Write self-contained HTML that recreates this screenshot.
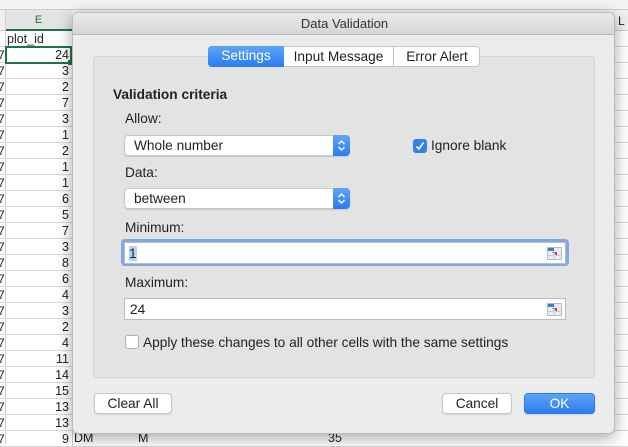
<!DOCTYPE html>
<html><head><style>
*{box-sizing:border-box;margin:0;padding:0}
body{width:628px;height:444px;overflow:hidden;background:#fff;font-family:"Liberation Sans",sans-serif;font-size:13.7px;color:#222;position:relative}
.a{position:absolute}
.row{position:absolute;left:0;width:628px;height:16px;border-bottom:1px solid #d8d8d8}
.num{position:absolute;right:559px;font-size:12.5px;top:1px}
.lbl{position:absolute;font-size:13.7px;color:#222}
.sel{position:absolute;background:#fff;border:1px solid #c8c8c8;border-radius:4px;height:21px;box-shadow:0 1px 1px rgba(0,0,0,.12)}
.sel span{position:absolute;left:9px;top:2px}
.sel i{position:absolute;right:-1px;top:-1px;width:17px;height:21px;background:linear-gradient(#5ea4f7,#2c7cf0);border-radius:0 4px 4px 0}
.sel i svg{position:absolute;left:4px;top:4px}
.inp{position:absolute;background:#fff;border:1px solid #bdbdbd;height:22px}
.ic{position:absolute;right:3px;top:4px;width:15px;height:13px}
.btn{position:absolute;background:#fff;border:1px solid #c6c6c6;border-radius:4px;height:21px;text-align:center;line-height:19px;font-size:13.7px;box-shadow:0 1px 1px rgba(0,0,0,.1)}
</style></head><body>
<div class="a" style="left:0;top:0;width:628px;height:10px;background:#f4f4f4;border-bottom:1px solid #ccc"></div>
<div class="a" style="left:0;top:10px;width:628px;height:21px;background:#f0f0f0;border-bottom:1px solid #ccc"></div>
<div class="a" style="left:5px;top:10px;width:67px;height:21px;background:#e4e4e4;border-bottom:2px solid #217346;color:#217346;text-align:center;font-size:11px;line-height:20px">E</div>
<div class="a" style="left:618px;top:14px;font-size:12px">L</div>
<div class="a" style="left:5px;top:10px;width:1px;height:434px;background:#d0d0d0"></div>
<div class="row" style="top:31px"><span class="a" style="left:7px;top:1px;font-size:12.5px">plot_id</span></div>
<div id="rows"></div>
<div class="a" style="left:5px;top:46px;width:67px;height:18px;border:2px solid #217346"></div>
<div class="a" style="left:68px;top:60px;width:5px;height:5px;background:#217346"></div>
<div class="a" style="left:74px;top:431px;font-size:12.5px">DM</div>
<div class="a" style="left:138px;top:431px;font-size:12.5px">M</div>
<div class="a" style="left:328px;top:431px;font-size:12.5px">35</div>
<div class="a" style="left:72px;top:12px;width:543px;height:422px;background:#ececec;border-radius:6px;box-shadow:0 4px 16px rgba(0,0,0,.35);border:1px solid #bbb;overflow:hidden">
 <div class="a" style="left:0;top:0;width:543px;height:22px;background:linear-gradient(#ebebeb,#d6d6d6);border-bottom:1px solid #b8b8b8;text-align:center;line-height:21px;font-size:13px;color:#333">Data Validation</div>
</div>
<div class="a" style="left:93px;top:56px;width:502px;height:322px;background:#e3e3e3;border:1px solid #d6d6d6;border-radius:4px"></div>
<div class="a" style="left:208px;top:46px;width:272px;height:21px;background:#fff;border:1px solid #c6c6c6;border-radius:4px;font-size:13.7px">
 <div class="a" style="left:-1px;top:-1px;width:76px;height:21px;background:linear-gradient(#5ea4f7,#2c7cf0);color:#fff;border-radius:4px 0 0 4px;text-align:center;line-height:20px">Settings</div>
 <div class="a" style="left:75px;top:0;width:110px;height:19px;border-right:1px solid #c6c6c6;text-align:center;line-height:19px">Input Message</div>
 <div class="a" style="left:185px;top:0;width:86px;height:19px;text-align:center;line-height:19px">Error Alert</div>
</div>
<div class="lbl" style="left:113px;top:87px;font-weight:bold">Validation criteria</div>
<div class="lbl" style="left:125px;top:111px">Allow:</div>
<div class="sel" style="left:124px;top:135px;width:226px"><span>Whole number</span><i><svg width="9" height="13" viewBox="0 0 9 13"><path d="M1.5 5L4.5 2L7.5 5M1.5 8L4.5 11L7.5 8" fill="none" stroke="#fff" stroke-width="1.4"/></svg></i></div>
<div class="a" style="left:413px;top:139px;width:14px;height:14px;border-radius:3px;background:#2f80f0"><svg width="14" height="14" viewBox="0 0 14 14"><path d="M3.5 7.5L6 10L10.5 3.5" fill="none" stroke="#fff" stroke-width="1.6"/></svg></div>
<div class="lbl" style="left:431px;top:138px">Ignore blank</div>
<div class="lbl" style="left:125px;top:165px">Data:</div>
<div class="sel" style="left:124px;top:188px;width:226px"><span>between</span><i><svg width="9" height="13" viewBox="0 0 9 13"><path d="M1.5 5L4.5 2L7.5 5M1.5 8L4.5 11L7.5 8" fill="none" stroke="#fff" stroke-width="1.4"/></svg></i></div>
<div class="lbl" style="left:125px;top:220px">Minimum:</div>
<div class="a" style="left:121px;top:239px;width:448px;height:27px;border:3px solid #7ea7e6;border-radius:4px"></div>
<div class="inp" style="left:124px;top:242px;width:442px"><span class="a" style="left:4px;top:3px;background:#b3d3fa">1</span><svg class="ic" viewBox="0 0 15 13"><rect x="0.5" y="0.5" width="14" height="12" fill="#e8eef6" stroke="#b0bccb"/><rect x="1" y="1" width="6" height="3" fill="#3d7cc9"/><path d="M5 5h5v4z" fill="#c8383a"/><path d="M1 8.5h13M7.5 5v8" stroke="#c5cfdc"/></svg></div>
<div class="lbl" style="left:125px;top:275px">Maximum:</div>
<div class="inp" style="left:124px;top:298px;width:442px"><span class="a" style="left:5px;top:3px">24</span><svg class="ic" viewBox="0 0 15 13"><rect x="0.5" y="0.5" width="14" height="12" fill="#e8eef6" stroke="#b0bccb"/><rect x="1" y="1" width="6" height="3" fill="#3d7cc9"/><path d="M5 5h5v4z" fill="#c8383a"/><path d="M1 8.5h13M7.5 5v8" stroke="#c5cfdc"/></svg></div>
<div class="a" style="left:125px;top:335px;width:14px;height:14px;border:1px solid #b0b0b0;border-radius:3px;background:#fff"></div>
<div class="lbl" style="left:143px;top:335px">Apply these changes to all other cells with the same settings</div>
<div class="btn" style="left:94px;top:393px;width:78px">Clear All</div>
<div class="btn" style="left:442px;top:393px;width:70px">Cancel</div>
<div class="btn" style="left:524px;top:393px;width:71px;background:linear-gradient(#5ea4f7,#2c7cf0);color:#fff;border-color:#2c7cf0">OK</div>
<script>
var v=[24,3,2,7,3,1,2,1,1,6,5,7,3,8,6,4,3,2,4,11,14,15,13,13,9],h='';
for(var i=0;i<v.length;i++){h+='<div class="row" style="top:'+(47+i*16)+'px"><span class="a" style="left:-2px;top:1px;font-size:12px">7</span><span class="num">'+v[i]+'</span><span class="a" style="left:72px;top:0;width:1px;height:16px;background:#d0d0d0"></span></div>';}
document.getElementById('rows').innerHTML=h;
</script>
</body></html>
